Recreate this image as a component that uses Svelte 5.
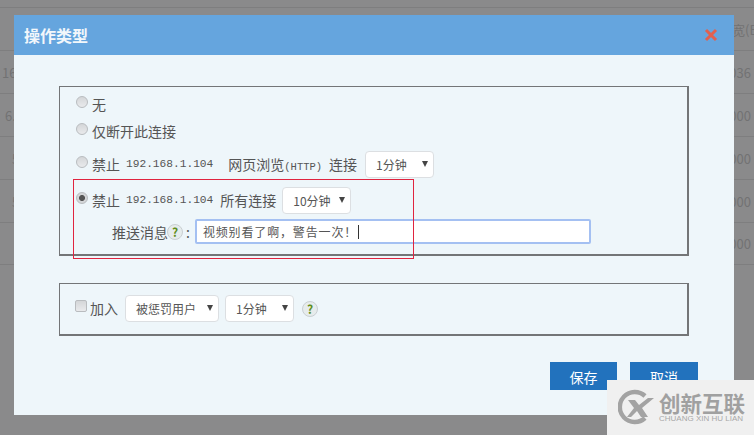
<script lang="ts">
// x is where the clipped number starts, the modal hides the rest of it
const rows = [
  { left: '16', right: '036', x: 2 },
  { left: '6.', right: '000', x: 5 },
  { left: '5', right: '000', x: 12 },
  { left: '5', right: '000', x: 12 },
  { left: '', right: '000', x: 0 }
];
</script>

<main class="page">
  <div class="table">
    <div class="thead"><span></span><span class="cell-r head-r">宽(B</span></div>
    {#each rows as row}
      <div class="trow">
        <span style:padding-left="{row.x}px">{row.left}</span>
        <span class="cell-r">{row.right}</span>
      </div>
    {/each}
  </div>

  <section class="modal">
    <header class="modal-head">
      <h2>操作类型</h2>
      <svg class="close" width="14" height="14" viewBox="0 0 14 14">
        <path d="M2 2 L12 12 M12 2 L2 12" stroke="#e2604f" stroke-width="3" fill="none" />
      </svg>
    </header>

    <div class="modal-body">
      <div class="group first">
        <div class="row r1"><input type="radio" name="op" /><span>无</span></div>
        <div class="row r2"><input type="radio" name="op" /><span>仅断开此连接</span></div>
        <div class="row r3">
          <input type="radio" name="op" />
          <span>禁止</span><span class="ip">192.168.1.104</span>
          <span class="svc">网页浏览<span class="paren">(HTTP)</span></span><span class="conn">连接</span>
          <div class="select w69 s1"><span>1分钟</span><i></i></div>
        </div>
        <div class="row r4">
          <input type="radio" name="op" checked />
          <span>禁止</span><span class="ip">192.168.1.104</span>
          <span class="all">所有连接</span>
          <div class="select w69 s2"><span>10分钟</span><i></i></div>
        </div>
        <div class="row r5">
          <span>推送消息</span>
          <span class="help">?</span><span class="colon">:</span>
          <div class="msg">视频别看了啊，警告一次！<b class="caret"></b></div>
        </div>
      </div>

      <div class="group second">
        <input type="checkbox" />
        <span class="join">加入</span>
        <div class="select w94"><span>被惩罚用户</span><i></i></div>
        <div class="select w69 s3"><span>1分钟</span><i></i></div>
        <span class="help big">?</span>
      </div>

      <div class="actions">
        <button>保存</button>
        <button class="cancel">取消</button>
      </div>
    </div>
  </section>

  <div class="annotation"></div>

  <div class="mark">
    <svg width="38" height="36" viewBox="0 0 38 36">
      <path d="M27 7 A15 15 0 1 0 27 29" stroke="#a3a3a3" stroke-width="4.5" fill="none" />
      <path d="M10 11 L17 11 L21 16 L30 9 L36 9 L24 19 L30 28 L23 28 L19 22 L13 28 L9 28 L16 19 Z" fill="#a3a3a3" />
    </svg>
    <div class="mark-text">
      <div class="mark-cn">创新互联</div>
      <div class="mark-en">CHUANG XIN HU LIAN</div>
    </div>
  </div>
</main>

<style>
:global(body) {
  margin: 0;
  background: #8a8a8b;
  font-family: "Noto Sans CJK SC", "Liberation Sans", sans-serif;
}
.page {
  position: relative;
  width: 754px;
  height: 435px;
  overflow: hidden;
  color: #555;
  font-size: 14px;
}
.table {
  padding-top: 7px;
  color: #727273;
  font-size: 13px;
}
.thead, .trow {
  display: flex;
  justify-content: space-between;
  height: 43px;
  box-sizing: border-box;
  border-top: 1px solid #7e7e7f;
  align-items: center;
  white-space: nowrap;
}
.trow:last-child {
  border-bottom: 1px solid #7e7e7f;
}
.cell-r {
  padding-right: 3px;
}
.head-r {
  padding-right: 0;
  margin-right: -4px;
}
.modal {
  position: absolute;
  left: 14px;
  top: 15px;
  width: 720px;
  height: 400px;
  background: #eef6fa;
}
.modal-head {
  height: 40px;
  background: #65a5de;
  display: flex;
  align-items: center;
  justify-content: space-between;
  padding: 0 16px 0 10px;
}
.modal-head h2 {
  margin: 0;
  color: #f2f7fb;
  font-size: 16px;
  font-weight: 700;
  line-height: 38px;
}
.modal-body {
  padding: 31px 36px 0 45px;
}
.group {
  border: 2px solid #737577;
  border-width: 1px 2px 2px 1px;
  box-sizing: border-box;
  width: 630px;
}
.first {
  height: 170px;
  padding: 3px 0 0 16px;
}
.row {
  display: flex;
  align-items: center;
  white-space: nowrap;
}
.r1, .r2 {
  height: 27px;
}
.r3 {
  height: 36px;
  margin-top: 2px;
}
.r4 {
  height: 36px;
}
.r5 {
  height: 25px;
  margin-top: 1px;
  padding-left: 36px;
}
input[type="radio"], input[type="checkbox"] {
  appearance: none;
  margin: 0 4px 4px 0;
  width: 12px;
  height: 12px;
  box-sizing: border-box;
  flex: none;
  border: 1px solid #b9bcbf;
  background: linear-gradient(#d4d6d8, #e9eaec);
}
input[type="radio"] {
  border-radius: 50%;
}
input[type="radio"]:checked {
  background: radial-gradient(circle, #555 0 2.6px, #d4d6d8 3.4px);
}
input[type="checkbox"] {
  border-radius: 2px;
  margin: 0 3px 4px 0;
}
.ip {
  font-family: "Liberation Mono", monospace;
  font-size: 11.2px;
  margin-left: 6px;
}
.svc {
  margin-left: 15px;
}
.paren {
  font-family: "Liberation Mono", monospace;
  font-size: 10.5px;
}
.conn {
  margin-left: 7px;
}
.all {
  margin-left: 7px;
}
.select {
  box-sizing: border-box;
  height: 27px;
  background: #fff;
  border: 1px solid #dcdfe2;
  border-radius: 4px;
  display: flex;
  align-items: center;
  justify-content: space-between;
  padding: 0 5px 0 10px;
  font-size: 12px;
  color: #555;
  flex: none;
}
.select i {
  width: 0;
  height: 0;
  border-left: 3px solid transparent;
  border-right: 3px solid transparent;
  border-top: 6px solid #444;
}
.w69 {
  width: 69px;
}
.w94 {
  width: 94px;
}
.s1 {
  margin-left: 8px;
}
.s2 {
  margin-left: 6px;
}
.s3 {
  margin-left: 6px;
}
.help {
  width: 16px;
  height: 16px;
  box-sizing: border-box;
  margin-left: -1px;
  border-radius: 50%;
  border: 1px solid #c9cfd2;
  background: #e6ecec;
  color: #5f8f1c;
  font-size: 12px;
  font-weight: 700;
  line-height: 14px;
  text-align: center;
  flex: none;
}
.colon {
  margin: 0 5px 0 3px;
}
.msg {
  box-sizing: border-box;
  width: 396px;
  height: 25px;
  background: #fff;
  border: 2px solid #a4c0f2;
  border-radius: 2px;
  display: flex;
  align-items: center;
  padding-left: 6px;
  font-size: 12px;
  letter-spacing: 0.85px;
}
.caret {
  width: 1px;
  height: 14px;
  margin-left: 1px;
  background: #333;
}
.second {
  height: 53px;
  margin-top: 27px;
  padding: 0 0 2px 15px;
  display: flex;
  align-items: center;
}
.join {
  margin-right: 7px;
}
.second .help {
  margin-left: 8px;
  margin-top: 2px;
}
.actions {
  display: flex;
  justify-content: flex-end;
  gap: 13px;
  margin-top: 26px;
}
.actions button {
  width: 67px;
  height: 28px;
  border: 0;
  padding: 2px 0 0;
  background: #2272bd;
  color: #fff;
  font: inherit;
  font-size: 14px;
}
.actions .cancel {
  width: 68px;
}
.annotation {
  position: absolute;
  left: 73px;
  top: 179px;
  width: 341px;
  height: 80px;
  box-sizing: border-box;
  border: 1px solid #e0243f;
  pointer-events: none;
}
.mark {
  position: absolute;
  left: 607px;
  top: 380px;
  width: 147px;
  height: 55px;
  background: #f0f0f0;
  display: flex;
  align-items: center;
  padding: 0 0 1px 11px;
  box-sizing: border-box;
  gap: 3px;
}
.mark-cn {
  font-size: 21.5px;
  font-weight: 700;
  line-height: 24px;
  color: #a0a0a0;
  white-space: nowrap;
}
.mark-en {
  font-family: "Liberation Sans", sans-serif;
  font-size: 8px;
  line-height: 8px;
  color: #a8a8a8;
  white-space: nowrap;
}
</style>
